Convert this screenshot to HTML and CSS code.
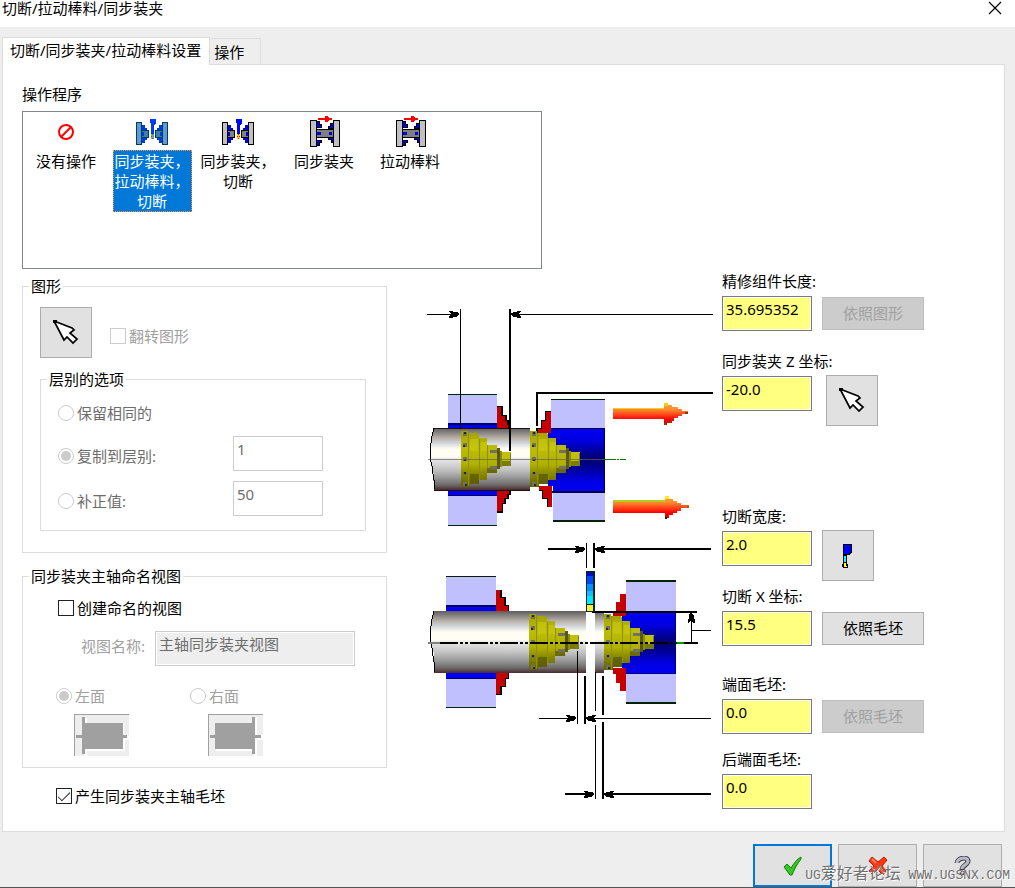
FILE: index.html
```html
<!DOCTYPE html>
<html lang="zh-CN">
<head>
<meta charset="utf-8">
<title>切断/拉动棒料/同步装夹</title>
<link rel="stylesheet" href="styles.css">
</head>
<body>
<svg class="defs" aria-hidden="true">
  <defs>
    <linearGradient id="steel" x1="0" y1="0" x2="0" y2="1">
      <stop offset="0" stop-color="#605c5c"/><stop offset=".08" stop-color="#8a8684"/><stop offset=".16" stop-color="#b8b0a8"/>
      <stop offset=".24" stop-color="#d0d4d8"/><stop offset=".34" stop-color="#fffdf4"/><stop offset=".46" stop-color="#fffdf4"/>
      <stop offset=".5" stop-color="#e8e8e8"/><stop offset=".68" stop-color="#c0c0c0"/><stop offset=".8" stop-color="#989898"/>
      <stop offset=".92" stop-color="#6c6868"/><stop offset="1" stop-color="#4a2a2c"/>
    </linearGradient>
    <linearGradient id="bore" x1="0" y1="0" x2="0" y2="1">
      <stop offset="0" stop-color="#0000f4"/><stop offset=".2" stop-color="#0000e0"/><stop offset=".35" stop-color="#0000a0"/>
      <stop offset=".5" stop-color="#00006c"/><stop offset=".65" stop-color="#0000a0"/><stop offset=".82" stop-color="#0000e0"/><stop offset="1" stop-color="#0000f8"/>
    </linearGradient>
    <linearGradient id="olive" x1="0" y1="0" x2="0" y2="1">
      <stop offset="0" stop-color="#a0a000"/><stop offset=".3" stop-color="#bcbc08"/><stop offset=".6" stop-color="#b0b000"/>
      <stop offset=".75" stop-color="#8c8c00"/><stop offset="1" stop-color="#606000"/>
    </linearGradient>
    <linearGradient id="fire" x1="0" y1="0" x2="0" y2="1">
      <stop offset="0" stop-color="#f8b020"/><stop offset=".3" stop-color="#ff8830"/><stop offset=".55" stop-color="#ff4018"/><stop offset=".75" stop-color="#ff0000"/><stop offset="1" stop-color="#d80000"/>
    </linearGradient>
    <g id="collet">
      <path fill="url(#olive)" d="M0-28H7V-26H16L18-25V-21H26V-14H36V14H26V21H18V25H9V28H0z"/>
      <path fill="#909000" d="M7-26H8V27H7zM18-20H19V21H18zM26-14H27V14H26z"/>
      <path fill="#585800" d="M9 15H18V25H9zM26 9H36V14H26z" opacity=".7"/>
      <path fill="#c8c810" d="M20-17H26V-8H20zM9-20H17V-8H9z" opacity=".7"/>
      <path fill="#585808" d="M36-11H39V10H36z"/><path fill="#8c8c08" d="M39-8H41V8H39z"/>
      <path fill="#c0c008" d="M41-7H50V2H41z"/><path fill="#7c7c00" d="M41 2H50V7H41z"/>
      <path fill="#787848" d="M49-6H50V6H49z"/>
      <path fill="#707068" d="M29-9H36V-6H29zM29 7H36V10H29zM2-27H6V-23H2zM2-16H6V-12H2zM2-2H6V2H2zM2 13H6V16H2zM2 23H6V27H2z"/>
      <path fill="#282818" d="M3-27H5V-25H3zM2-14H4V-12H2zM3 0H5V2H3zM3 13H5V15H3zM4 25H6V27H4z"/>
    </g>
    <path id="head" d="M-10-3H-7L-5-2H-3L0-1V1L-3 3H-5L-7 4H-10V2L-8 1V-1L-10-2z"/>
    <g id="cursor">
      <path d="M1 1 19 8 21 10 17 13 24 19 20 23 14 17 11 20z" fill="#fff" stroke="#000" stroke-width="1.7"/>
      <path d="M0 0H4V3H0z"/>
    </g>
    <g id="chuck-cut" shape-rendering="crispEdges">
      <g id="cut-half">
        <path class="jaw" d="M6 6H9V9H11V12H13V18H11V21H9V24H6z"/>
        <path class="ink" d="M5 11H13V19H5z"/><path class="spindle" d="M6 12H12V18H6z"/><path class="jaw" d="M6 13H8V17H6z"/>
        <path class="ink" d="M0 3H6V26H0z"/><path class="plate" d="M1 4H5V25H1z"/>
      </g>
      <use href="#cut-half" transform="matrix(-1 0 0 1 32 0)"/>
      <path class="blade" d="M14 0H20V4L18 6V15H15V5L14 4z"/>
      <path class="tip" d="M15 15H18V20H15z"/><path class="tip-dot" d="M16 15H17V16H16zM15 17H16V18H15zM17 17H18V18H17zM16 19H17V20H16z"/>
    </g>
    <g id="chuck-grip" shape-rendering="crispEdges">
      <path d="M6 12H24V21H6z"/><path d="M6 13H24V20H6z" fill="#808080"/>
      <path d="M7 4H10V7H12V11H7zM7 23H12V26H10V29H7zM23 6H20V9H18V12H23zM18 20H23V26H21V23H18z"/>
      <path d="M7 5H9V8H11V10H7zM7 24H11V25H9V28H7zM23 7H21V10H19V11H23zM19 21H23V25H22V22H19zM7 15H11V18H7zM19 15H22V18H19z" fill="#0000e8"/>
      <path d="M0 3H7V30H0zM23 3H30V30H23z"/><path d="M1 4H6V29H1zM24 4H29V29H24z" fill="#c0c0c0"/>
      <path d="M8 1H15V-1H18L19 1H22V3H19L18 5H15V3H8z" fill="#ff0000"/>
    </g>
  </defs>
</svg>

<header class="titlebar">
  <h1 class="title">切断/拉动棒料/同步装夹</h1>
  <button class="close" type="button" aria-label="关闭"><svg width="14" height="14" viewBox="0 0 14 14"><path d="M1 1 13 13M13 1 1 13" stroke="#000" stroke-width="1.2"/></svg></button>
</header>

<nav class="tabs" role="tablist">
  <button class="tab tab-active" type="button" role="tab" aria-selected="true">切断/同步装夹/拉动棒料设置</button>
  <button class="tab" type="button" role="tab" aria-selected="false">操作</button>
</nav>

<main class="panel">
  <h2 class="caption">操作程序</h2>
  <div class="list" role="listbox" aria-label="操作程序">
    <button class="item" type="button" role="option" aria-selected="false">
      <svg class="item-icon" width="32" height="34" viewBox="0 0 32 34"><circle cx="16" cy="16" r="7" fill="none" stroke="#f00" stroke-width="2"/><path d="M11 21 21 11" stroke="#f00" stroke-width="2"/></svg>
      <span class="item-label">没有操作</span>
    </button>
    <button class="item item-selected" type="button" role="option" aria-selected="true">
      <svg class="item-icon" width="32" height="34" viewBox="0 -3 32 34"><use href="#chuck-cut"/></svg>
      <span class="item-label">同步装夹，拉动棒料，切断</span>
    </button>
    <button class="item" type="button" role="option" aria-selected="false">
      <svg class="item-icon" width="32" height="34" viewBox="0 -3 32 34"><use href="#chuck-cut"/></svg>
      <span class="item-label">同步装夹，切断</span>
    </button>
    <button class="item" type="button" role="option" aria-selected="false">
      <svg class="item-icon" width="32" height="34" viewBox="-2 -1 32 34"><use href="#chuck-grip"/></svg>
      <span class="item-label">同步装夹</span>
    </button>
    <button class="item" type="button" role="option" aria-selected="false">
      <svg class="item-icon" width="32" height="34" viewBox="-2 -1 32 34"><use href="#chuck-grip"/></svg>
      <span class="item-label">拉动棒料</span>
    </button>
  </div>

  <div class="columns">
    <section class="options">
      <fieldset class="group">
        <legend>图形</legend>
        <div class="group-body shape-body">
          <div class="shape-row">
            <button class="square" type="button" aria-label="选择图形"><svg width="26" height="26" viewBox="0 0 26 26"><use href="#cursor"/></svg></button>
            <label class="choice muted"><input type="checkbox" disabled>翻转图形</label>
          </div>
          <fieldset class="group">
            <legend>层别的选项</legend>
            <div class="layer-grid">
              <label class="choice dim wide"><input type="radio" name="layer" disabled>保留相同的</label>
              <label class="choice dim"><input type="radio" name="layer" checked disabled>复制到层别:</label>
              <input class="box" type="text" value="1" aria-label="层别" disabled>
              <label class="choice dim"><input type="radio" name="layer" disabled>补正值:</label>
              <input class="box" type="text" value="50" aria-label="补正值" disabled>
            </div>
          </fieldset>
        </div>
      </fieldset>

      <fieldset class="group view-group">
        <legend>同步装夹主轴命名视图</legend>
        <label class="choice create"><input type="checkbox">创建命名的视图</label>
        <div class="name-row">
          <label class="muted" for="view-name">视图名称:</label>
          <input class="box box-name" id="view-name" type="text" value="主轴同步装夹视图" disabled>
        </div>
        <div class="sides">
          <div class="side">
            <label class="choice muted"><input type="radio" name="side" checked disabled>左面</label>
            <svg class="side-pic" width="55" height="42" viewBox="0 0 55 42" shape-rendering="crispEdges">
              <path d="M0 0H55V42H0z" fill="#eee"/><path d="M10 9V4H13V9H50V22H55V26H51V37H13V42H10z" fill="#fff"/><path d="M0 0H55V1H1V42H0z" fill="#a0a0a0"/>
              <path d="M8 3H11V9H49V21H53V24H49V35H11V40H8V24H2V21H8z" fill="#a0a0a0"/>
            </svg>
          </div>
          <div class="side">
            <label class="choice muted"><input type="radio" name="side" disabled>右面</label>
            <svg class="side-pic" width="55" height="42" viewBox="0 0 55 42" shape-rendering="crispEdges">
              <path d="M0 0H55V42H0z" fill="#eee"/><path d="M8 10H46V4H49V21H55V26H49V42H46V37H8z" fill="#fff"/><path d="M0 0H55V1H1V42H0z" fill="#a0a0a0"/>
              <path d="M7 9H44V3H47V21H53V24H47V40H44V35H7V24H2V21H7z" fill="#a0a0a0"/>
            </svg>
          </div>
        </div>
      </fieldset>
      <label class="choice stock"><input type="checkbox" checked>产生同步装夹主轴毛坯</label>
    </section>

    <div class="drawing">
      <svg width="335" height="540" viewBox="387 271 335 540" shape-rendering="crispEdges" role="img" aria-label="主轴同步装夹与切断示意图">
        <!-- upper view: left chuck -->
        <path d="M448 394H497V424H448zM448 496H497V525H448z" fill="#c0c0ff"/>
        <path d="M448 394H497V395H448zM448 525H497V526H448z" fill="#002400"/>
        <path d="M448 424H497V428H448zM448 491H497V495H448z" fill="#0000f0"/>
        <path d="M448 423H497V425H448zM448 495H497V496H448z" fill="#000060"/>
        <path d="M497 406H503V415H507V420H509V424H510V428H497zM497 491H511V495H509V499H506V504H503V513H497z"/>
        <path d="M497 407H501V416H505V421H507V425H508V428H497zM497 491H509V494H507V498H504V503H502V511H497z" fill="#c40000"/>
        <!-- upper view: bar -->
        <path d="M434 428H530V490H434L435 485 433 480 434 474 431 466 430 458V444L432 436z" fill="url(#steel)"/>
        <path d="M434 428H530V429H434zM434 490H530V491H434z" fill="#201010"/>
        <path d="M434 428 432 436 431 443 430 450V458L432 466 433 474 434 480V489" fill="none" stroke="#000"/>
        <!-- upper view: right chuck -->
        <path d="M551 399H605V428H551zM553 492H605V520H553z" fill="#c0c0ff"/>
        <path d="M551 399H605V400H551zM553 520H605V522H553z" fill="#002400"/>
        <path d="M548 428H605V492H553V486H548z" fill="url(#bore)"/>
        <path d="M551 428H605V429H551zM604 428H605V492H604zM552 491H605V493H552z" fill="#000040"/>
        <path d="M536 433V428H541V420H545V411H551V433zM539 486H552V507H547V499H542V491H539z"/>
        <path d="M538 433V429H542V421H546V412H551V433zM539 486H552V507H548V498H543V490H539z" fill="#c40000"/>
        <use href="#collet" x="461" y="459"/><use href="#collet" x="530" y="459"/>
        <path d="M428 459H605V460H428z" fill="#606058" opacity=".7"/>
        <path d="M605 459H616V460H605zM617 459H619V460H617zM620 459H626V460H620z" fill="#008000"/>
        <!-- pull direction -->
        <path d="M613 408H664V403H668V405H672V407H678V409H682V411H688V414H682V416H678V418H674V421H670V423H667V425H664V419H613z" fill="url(#fire)"/>
        <path d="M613 408H664V409H613zM664 403H668V406H664z" fill="#f0d010"/><path d="M685 412H688V414H685zM664 423H667V425H664zM668 421H672V423H668z" fill="#983000"/>
        <path d="M613 500H665V496H669V499H673V501H677V503H681V505H689V508H681V511H677V513H673V515H669V518H665V513H613z" fill="url(#fire)"/>
        <path d="M613 500H665V502H613z" fill="#b0d020"/><path d="M665 496H669V499H665z" fill="#ffec10"/><path d="M687 506H689V508H687z" fill="#688000"/><path d="M665 517H667V519H665z" fill="#003800"/>
        <!-- upper view: dimensions -->
        <path d="M460 309H461V429H460zM509 309H511V451H509zM427 314H452V315H427zM511 314H713V315H511zM536 392H713V394H536zM536 392H538V426H536z"/>
        <use href="#head" x="459" y="314"/><use href="#head" transform="translate(511 314) scale(-1 1)"/>

        <!-- lower view: left chuck -->
        <path d="M446 576H496V605H446zM446 679H496V707H446z" fill="#c0c0ff"/>
        <path d="M446 576H496V577H446zM446 707H496V708H446z" fill="#002400"/>
        <path d="M446 605H496V611H446zM446 673H496V679H446z" fill="#0000f0"/>
        <path d="M446 605H496V607H446zM446 678H496V679H446z" fill="#000060"/>
        <path d="M496 590H502V597H506V605H509V611H496zM496 673H509V679H506V687H502V695H496z"/>
        <path d="M496 590H500V598H504V606H508V611H496zM496 673H508V678H505V686H500V694H496z" fill="#c40000"/>
        <!-- lower view: bar and parted piece -->
        <path d="M434 611H586V673H434L435 666 433 660 434 653 431 645 430 637V627L432 619z" fill="url(#steel)"/>
        <path d="M595 611H604V673H595z" fill="url(#steel)"/>
        <path d="M434 611 432 619 431 626 430 632V640L432 648 433 656 434 662V672" fill="none" stroke="#000"/>
        <!-- lower view: right chuck -->
        <path d="M626 580H676V611H626zM626 674H676V702H626z" fill="#c0c0ff"/>
        <path d="M626 580H676V582H626zM626 702H676V704H626z" fill="#002400"/>
        <path d="M622 613H676V674H622z" fill="url(#bore)"/>
        <path d="M626 673H676V674H626zM675 613H676V674H675z" fill="#000080"/>
        <path d="M616 602H620V594H626V616H613V611H616zM613 668H626V691H620V683H616V674H613z" fill="#c40000"/>
        <use href="#collet" x="529" y="642"/><use href="#collet" x="604" y="642"/>
        <path d="M592 611H697V613H592z"/>
        <path d="M587 613H594V673H587z" fill="#fff"/>
        <path d="M440 643H698" fill="none" stroke="#000" stroke-width="2" stroke-dasharray="18 2 3 2 3 2"/>
        <path d="M428 642H440V644H428z" fill="#808080"/>
        <path d="M677 642H684V644H677z" fill="#00a000"/>
        <!-- parting tool -->
        <path d="M586 571H595V612H586z" fill="#002820"/>
        <path d="M587 573H593V576H587z" fill="#0000ff"/><path d="M587 576H593V584H587z" fill="#0048ff"/><path d="M587 584H593V591H587z" fill="#0090ff"/>
        <path d="M587 591H593V596H587z" fill="#18b8ff"/><path d="M587 596H593V604H587z" fill="#00e8ff"/><path d="M587 605H593V611H587z" fill="#fff030"/>
        <!-- lower view: dimensions -->
        <path d="M548 548H578V550H548zM586 543H587V568H586zM593 543H595V568H593zM602 548H711V550H602z"/>
        <use href="#head" x="585" y="549"/><use href="#head" transform="translate(595 549) scale(-1 1)"/>
        <path d="M691 618H692V642H691zM691 630H711V631H691z"/><use href="#head" transform="translate(691 613) rotate(-90)"/>
        <path d="M577 651H578V724H577zM584 676H586V724H584zM539 718H570V719H539zM593 718H711V719H593z"/>
        <use href="#head" x="576" y="718"/><use href="#head" transform="translate(586 718) scale(-1 1)"/>
        <path d="M595 672H596V711H595zM595 725H596V799H595zM602 676H604V715H602zM602 722H604V799H602zM565 793H587V795H565zM610 793H711V795H610z"/>
        <use href="#head" x="594" y="794"/><use href="#head" transform="translate(604 794) scale(-1 1)"/>
      </svg>
    </div>

    <section class="fields">
      <div class="field">
        <label for="len">精修组件长度:</label>
        <div class="field-row"><input class="box box-yellow" id="len" type="text" value="35.695352"><button class="push" type="button" disabled>依照图形</button></div>
      </div>
      <div class="field field-z">
        <label for="zpos">同步装夹 Z 坐标:</label>
        <div class="field-row"><input class="box box-yellow" id="zpos" type="text" value="-20.0"><button class="square square-z" type="button" aria-label="选择 Z 坐标"><svg width="26" height="26" viewBox="0 0 26 26"><use href="#cursor"/></svg></button></div>
      </div>
      <div class="field field-width">
        <label for="cutw">切断宽度:</label>
        <div class="field-row"><input class="box box-yellow" id="cutw" type="text" value="2.0"><button class="square" type="button" aria-label="选择刀具"><svg width="26" height="26" viewBox="0 0 26 26" shape-rendering="crispEdges"><path d="M8 1H17V9L14 12H12V19L13 23V24L12 25H9L7 24V23L8 19z"/><path d="M9 2H16V8L13 11H9z" fill="#00f"/><path d="M9 13H11V19H9z" fill="#0ff"/><path d="M9 20H11V23H9zM9 23H12V24H9z" fill="#ff0"/></svg></button></div>
      </div>
      <div class="field field-x">
        <label for="xpos">切断 X 坐标:</label>
        <div class="field-row"><input class="box box-yellow" id="xpos" type="text" value="15.5"><button class="push" type="button">依照毛坯</button></div>
      </div>
      <div class="field field-face">
        <label for="face">端面毛坯:</label>
        <div class="field-row"><input class="box box-yellow" id="face" type="text" value="0.0"><button class="push" type="button" disabled>依照毛坯</button></div>
      </div>
      <div class="field field-back">
        <label for="back">后端面毛坯:</label>
        <div class="field-row"><input class="box box-yellow" id="back" type="text" value="0.0"></div>
      </div>
    </section>
  </div>
</main>

<footer class="footer">
  <button class="action action-default" type="button" aria-label="确定"><svg width="20" height="20" viewBox="0 0 20 20"><path d="M1 11 4 8 8 12 C11 7 14 3 18 1 L18 3 C14 8 11 14 9 19 L7 19z" fill="#34c820" stroke="#148010"/></svg></button>
  <button class="action" type="button" aria-label="取消"><svg width="20" height="20" viewBox="0 0 20 20"><path d="M4 1 10 6 16 1 19 4 14 10 18 15 15 19 10 14 4 18 1 15 6 10 1 5z" fill="#ff3810" stroke="#c01800"/><path d="M4 3 8 7" stroke="#ff8060" stroke-width="2"/></svg></button>
  <button class="action" type="button" aria-label="帮助"><svg width="20" height="20" viewBox="0 0 20 20"><path d="M4 7C4 2 15 0 15 5C15 9 9 9 9 14" fill="none" stroke="#404048" stroke-width="5"/><path d="M4 7C4 2 15 0 15 5C15 9 9 9 9 13" fill="none" stroke="#b8b8c8" stroke-width="3"/><circle cx="9" cy="17" r="2" fill="#9898a8" stroke="#404048"/></svg></button>
  <div class="watermark">UG<span class="watermark-cjk">爱好者论坛</span> WWW.UGSNX.COM</div>
</footer>
</body>
</html>
```
FILE: styles.css
```css
* {
  box-sizing: border-box;
}

body {
  display: flex;
  flex-direction: column;
  min-height: 100vh;
  margin: 0;
  background: #eee;
  border-bottom: 1px solid #555;
  color: #000;
}

body,
button,
input {
  font: 15px/20px "Noto Sans", "Noto Sans CJK SC", sans-serif;
}

button,
input {
  margin: 0;
  padding: 0;
  color: inherit;
}

.defs {
  position: absolute;
  width: 0;
  height: 0;
}

svg {
  display: block;
}

.titlebar {
  display: flex;
  justify-content: space-between;
  align-items: flex-start;
  height: 27px;
  padding: 0 13px 0 2px;
  background: #fff;
}

.title,
.caption {
  margin: 0;
  font-size: 15px;
  font-weight: 400;
}

.title {
  line-height: 16px;
}

.close {
  padding: 1px 0;
  border: 0;
  background: none;
}

.tabs {
  display: flex;
  align-items: flex-end;
  padding: 10px 0 0 2px;
}

.tab {
  height: 26px;
  padding: 0 16px 0 4px;
  border: 1px solid #dcdcdc;
  border-width: 1px 1px 0 0;
  background: #eee;
}

.tab-active {
  position: relative;
  height: 28px;
  margin-bottom: -1px;
  padding: 0 8px 3px 7px;
  border-left-width: 1px;
  background: #fff;
}

.panel {
  margin: 0 10px 0 2px;
  padding: 19px 0 20px 19px;
  border: 1px solid #dcdcdc;
  background: #fff;
}

.list {
  display: flex;
  align-items: flex-start;
  width: 520px;
  height: 158px;
  margin-top: 7px;
  padding: 4px 0;
  border: 1px solid #828790;
}

.item {
  display: flex;
  flex-direction: column;
  align-items: center;
  width: 86px;
  border: 0;
  background: none;
}

.item-label {
  width: 79px;
  border: 1px solid transparent;
}

.item-selected .item-label {
  border: 1px dotted #ff9040;
  background: #0078d7;
  color: #fff;
}

.item-icon {
  --ink: #000;
  --plate: #c0c0c0;
  --spindle: #808080;
  --jaw: #0000d8;
  --blade: #0000ff;
  --tip: #ffd800;
  --tip-dot: #e00000;
}

.item-selected .item-icon {
  --ink: #003c6b;
  --plate: #609cca;
  --spindle: #407cac;
  --jaw: #003cd8;
  --blade: #003cf0;
  --tip: #80a86c;
  --tip-dot: #70606c;
}

.ink {
  fill: var(--ink);
}

.plate {
  fill: var(--plate);
}

.spindle {
  fill: var(--spindle);
}

.jaw {
  fill: var(--jaw);
}

.blade {
  fill: var(--blade);
}

.tip {
  fill: var(--tip);
}

.tip-dot {
  fill: var(--tip-dot);
}

.columns {
  display: flex;
  margin-top: 2px;
}

.options {
  flex: none;
  width: 365px;
  padding-top: 5px;
}

.drawing {
  display: flex;
  flex: 1;
  justify-content: flex-end;
}

.fields {
  flex: none;
  width: 282px;
}

.group {
  min-width: 0;
  margin: 0;
  padding: 0 6px;
  border: 1px solid #dcdcdc;
}

.group > legend {
  padding: 0 2px;
}

.shape-body {
  padding: 11px 14px 21px 11px;
}

.shape-row {
  display: flex;
  align-items: center;
  gap: 18px;
  margin-bottom: 11px;
}

.square {
  display: flex;
  flex: none;
  align-items: center;
  justify-content: center;
  width: 52px;
  height: 51px;
  border: 1px solid #adadad;
  background: #e1e1e1;
}

.choice {
  display: flex;
  align-items: center;
  gap: 3px;
}

.muted {
  color: #a0a0a0;
}

.dim {
  color: #6d6d6d;
}

.shape-row .choice {
  padding-top: 6px;
}

.choice input {
  display: grid;
  flex: none;
  place-items: center;
  width: 16px;
  height: 16px;
  border: 1px solid #222;
  background: #fff;
  appearance: none;
}

.choice input:disabled {
  border-color: #ccc;
}

.choice input[type="radio"] {
  border-radius: 50%;
}

.choice input[type="radio"]:checked::before {
  width: 10px;
  height: 10px;
  border-radius: 50%;
  background: #ccc;
  content: "";
}

.choice input[type="checkbox"]:checked::before {
  width: 11px;
  height: 5px;
  margin-bottom: 3px;
  border: solid #222;
  border-width: 0 0 1px 1px;
  transform: rotate(-45deg);
  content: "";
}

.layer-grid {
  display: grid;
  grid-template-rows: 30px 35px 35px;
  grid-template-columns: 175px 90px;
  gap: 10px 0;
  padding: 7px 0 14px 11px;
}

.layer-grid .choice {
  padding-top: 4px;
}

.wide {
  grid-column: 1 / -1;
}

.box {
  width: 90px;
  height: 35px;
  padding: 0 3px 9px;
  border: 1px solid #ccc;
  border-radius: 0;
  background: #fff;
  box-shadow: inset 0 0 0 1px #fff;
}

.box:disabled {
  color: #6d6d6d;
}

.box-name,
.box-name:disabled {
  width: 200px;
  padding-bottom: 11px;
  background: #eee;
}

.box-yellow {
  border-color: #7a7a7a;
  background: #ffff80;
}

.view-group {
  margin-top: 13px;
  padding-bottom: 11px;
}

.create {
  padding: 12px 0 0 29px;
}

.name-row {
  display: flex;
  align-items: center;
  gap: 9px;
  margin-top: 13px;
  padding-left: 52px;
}

.name-row label {
  width: 65px;
  padding-bottom: 6px;
  white-space: nowrap;
}

.sides {
  display: grid;
  grid-template-columns: 134px 134px;
  margin-top: 20px;
  padding-left: 27px;
}

.side-pic {
  margin: 8px 0 0 18px;
}

.stock {
  margin-top: 18px;
  padding-left: 34px;
}

.field label {
  display: block;
  margin-bottom: 5px;
}

.field-row {
  display: flex;
  align-items: flex-start;
  gap: 10px;
}

.fields .square {
  margin-top: -1px;
}

.square-z {
  margin-left: 4px;
}

.push {
  width: 102px;
  height: 33px;
  margin-top: 1px;
  padding-bottom: 2px;
  border: 1px solid #adadad;
  background: #e1e1e1;
}

.push:disabled {
  border-color: #bfbfbf;
  background: #ccc;
  color: #a0a0a0;
}

.field-z {
  margin-top: 20px;
}

.field-width {
  margin-top: 80px;
}

.field-x {
  margin-top: 5px;
}

.field-face {
  margin-top: 28px;
}

.field-back {
  margin-top: 15px;
}

.footer {
  position: relative;
  display: flex;
  justify-content: flex-end;
  gap: 6px;
  margin-top: auto;
  padding-right: 13px;
}

.action {
  display: flex;
  align-items: center;
  justify-content: center;
  width: 79px;
  height: 43px;
  border: 1px solid #adadad;
  background: #e1e1e1;
}

.action-default {
  border: 2px solid #0078d7;
}

.watermark {
  position: absolute;
  right: 5px;
  bottom: 1px;
  color: #707070;
  font-family: "Liberation Mono", "Noto Sans CJK SC", monospace;
  font-size: 13px;
  text-shadow: 1px 1px 0 #fff;
  white-space: nowrap;
  pointer-events: none;
}

.watermark-cjk {
  font-size: 16px;
}
```
